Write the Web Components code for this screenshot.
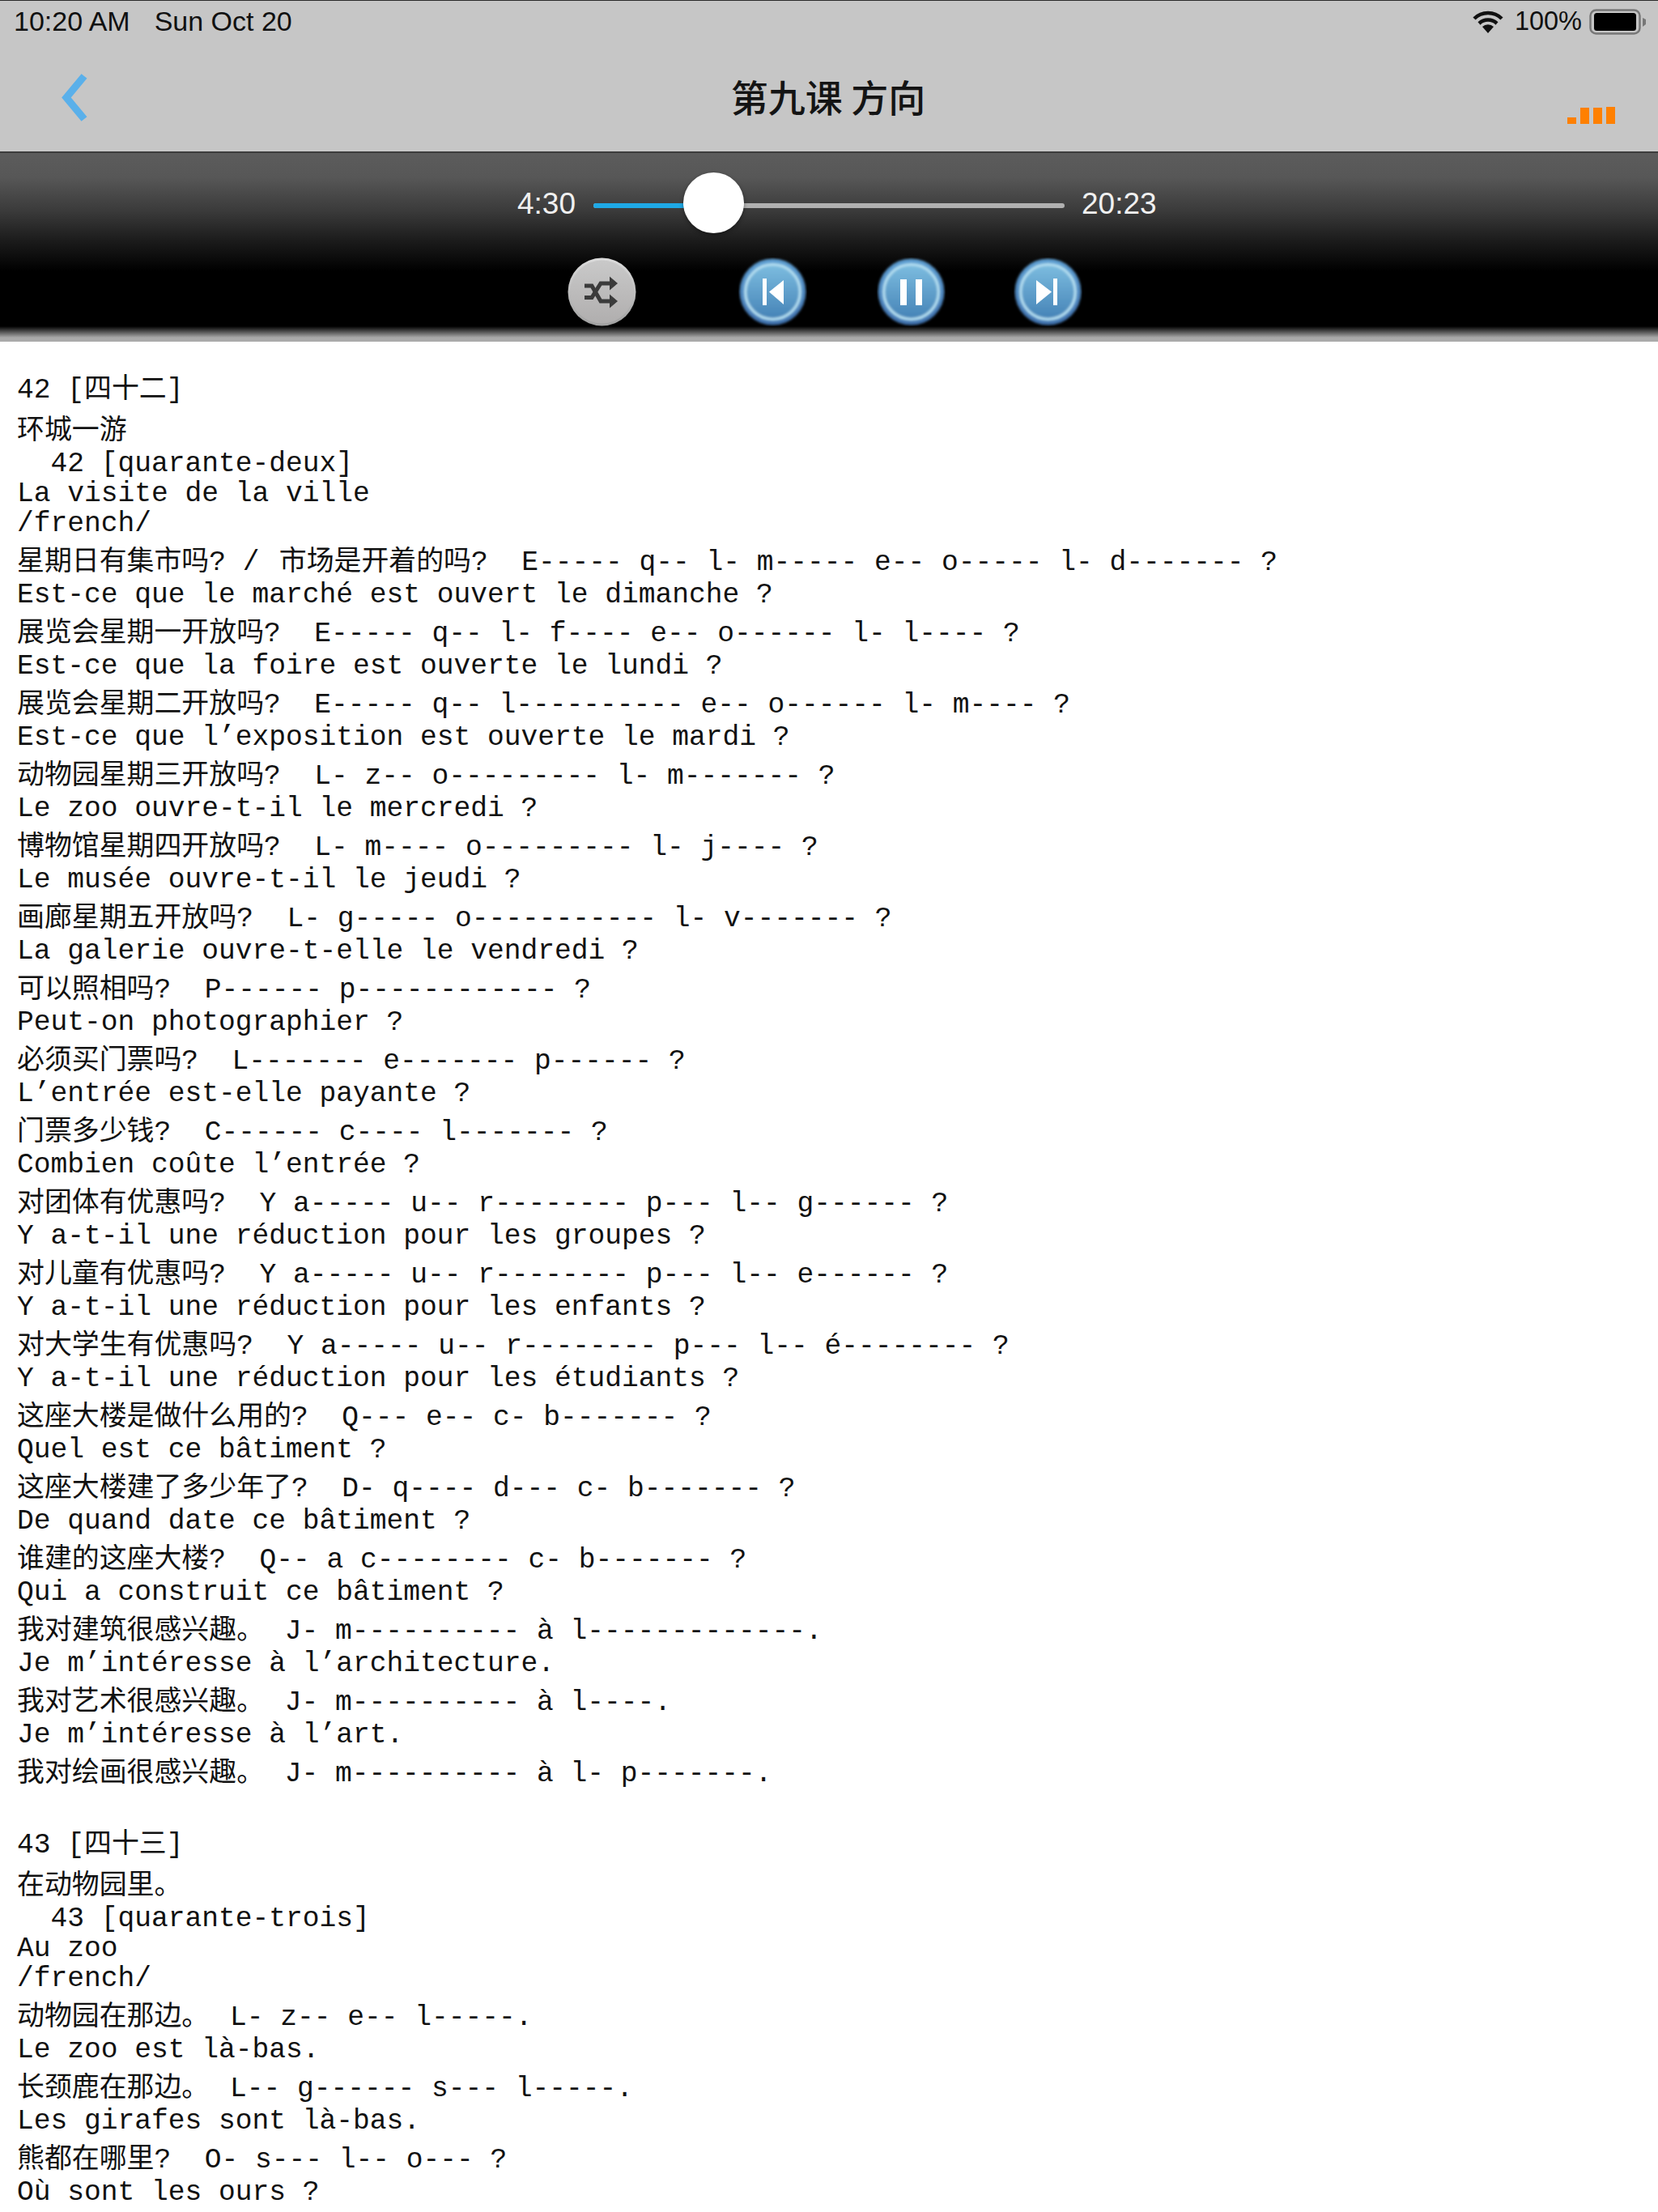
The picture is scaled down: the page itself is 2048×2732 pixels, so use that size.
<!DOCTYPE html>
<html lang="zh">
<head>
<meta charset="utf-8">
<title>第九课 方向</title>
<style>
  html, body { margin: 0; background: #fff; height: 2732px; overflow: hidden; }
</style>
</head>
<body>
<app-header title-text="第九课 方向"></app-header>
<audio-player current="4:30" total="20:23"></audio-player>
<lesson-text>
<zh-line>42 [<zh-t>四十二</zh-t>]</zh-line>
<zh-line><zh-t>环城一游</zh-t></zh-line>
<fr-line>  42 [quarante-deux]</fr-line>
<fr-line>La visite de la ville</fr-line>
<fr-line>/french/</fr-line>
<zh-line><zh-t>星期日有集市吗</zh-t>? / <zh-t gap>市场是开着的吗</zh-t>?  E----- q-- l- m----- e-- o----- l- d------- ?</zh-line>
<fr-line>Est-ce que le marché est ouvert le dimanche ?</fr-line>
<zh-line><zh-t>展览会星期一开放吗</zh-t>?  E----- q-- l- f---- e-- o------ l- l---- ?</zh-line>
<fr-line>Est-ce que la foire est ouverte le lundi ?</fr-line>
<zh-line><zh-t>展览会星期二开放吗</zh-t>?  E----- q-- l---------- e-- o------ l- m---- ?</zh-line>
<fr-line>Est-ce que l’exposition est ouverte le mardi ?</fr-line>
<zh-line><zh-t>动物园星期三开放吗</zh-t>?  L- z-- o--------- l- m------- ?</zh-line>
<fr-line>Le zoo ouvre-t-il le mercredi ?</fr-line>
<zh-line><zh-t>博物馆星期四开放吗</zh-t>?  L- m---- o--------- l- j---- ?</zh-line>
<fr-line>Le musée ouvre-t-il le jeudi ?</fr-line>
<zh-line><zh-t>画廊星期五开放吗</zh-t>?  L- g----- o----------- l- v------- ?</zh-line>
<fr-line>La galerie ouvre-t-elle le vendredi ?</fr-line>
<zh-line><zh-t>可以照相吗</zh-t>?  P------ p------------ ?</zh-line>
<fr-line>Peut-on photographier ?</fr-line>
<zh-line><zh-t>必须买门票吗</zh-t>?  L------- e------- p------ ?</zh-line>
<fr-line>L’entrée est-elle payante ?</fr-line>
<zh-line><zh-t>门票多少钱</zh-t>?  C------ c---- l------- ?</zh-line>
<fr-line>Combien coûte l’entrée ?</fr-line>
<zh-line><zh-t>对团体有优惠吗</zh-t>?  Y a----- u-- r-------- p--- l-- g------ ?</zh-line>
<fr-line>Y a-t-il une réduction pour les groupes ?</fr-line>
<zh-line><zh-t>对儿童有优惠吗</zh-t>?  Y a----- u-- r-------- p--- l-- e------ ?</zh-line>
<fr-line>Y a-t-il une réduction pour les enfants ?</fr-line>
<zh-line><zh-t>对大学生有优惠吗</zh-t>?  Y a----- u-- r-------- p--- l-- é-------- ?</zh-line>
<fr-line>Y a-t-il une réduction pour les étudiants ?</fr-line>
<zh-line><zh-t>这座大楼是做什么用的</zh-t>?  Q--- e-- c- b------- ?</zh-line>
<fr-line>Quel est ce bâtiment ?</fr-line>
<zh-line><zh-t>这座大楼建了多少年了</zh-t>?  D- q---- d--- c- b------- ?</zh-line>
<fr-line>De quand date ce bâtiment ?</fr-line>
<zh-line><zh-t>谁建的这座大楼</zh-t>?  Q-- a c-------- c- b------- ?</zh-line>
<fr-line>Qui a construit ce bâtiment ?</fr-line>
<zh-line><zh-t stop>我对建筑很感兴趣。</zh-t> J- m---------- à l-------------.</zh-line>
<fr-line>Je m’intéresse à l’architecture.</fr-line>
<zh-line><zh-t stop>我对艺术很感兴趣。</zh-t> J- m---------- à l----.</zh-line>
<fr-line>Je m’intéresse à l’art.</fr-line>
<zh-line><zh-t stop>我对绘画很感兴趣。</zh-t> J- m---------- à l- p-------.</zh-line>
<fr-line> </fr-line>
<zh-line>43 [<zh-t>四十三</zh-t>]</zh-line>
<zh-line><zh-t>在动物园里。</zh-t></zh-line>
<fr-line>  43 [quarante-trois]</fr-line>
<fr-line>Au zoo</fr-line>
<fr-line>/french/</fr-line>
<zh-line><zh-t stop>动物园在那边。</zh-t> L- z-- e-- l-----.</zh-line>
<fr-line>Le zoo est là-bas.</fr-line>
<zh-line><zh-t stop>长颈鹿在那边。</zh-t> L-- g------ s--- l-----.</zh-line>
<fr-line>Les girafes sont là-bas.</fr-line>
<zh-line><zh-t>熊都在哪里</zh-t>?  O- s--- l-- o--- ?</zh-line>
<fr-line>Où sont les ours ?</fr-line>
</lesson-text>

<script>
/* ------------- HEADER ------------- */
const template_header = document.createElement("template");
template_header.innerHTML = /*html*/`
  <style>
    :host {
      display: block;
      height: 187px;
      box-sizing: border-box;
      background: #c6c6c6;
      border-top: 1px solid #2a2a2a;
      font-family: "Liberation Sans", sans-serif;
      color: #111;
    }
    .status {
      display: flex;
      align-items: center;
      height: 51px;
      padding: 0 13px 0 17px;
      font-size: 34px;
    }
    .date { margin-left: 30px; }
    .right { margin-left: auto; display: flex; align-items: center; font-size: 32.5px; }
    .wifi { width: 40px; height: 28px; margin-right: 13px; }
    .battery { width: 72px; height: 32px; margin-left: 9px; }
    nav {
      display: grid;
      grid-template-columns: 1fr auto 1fr;
      align-items: center;
      height: 135px;
    }
    .back { width: 42px; height: 66px; margin-left: 72px; display: block; }
    h1 {
      margin: -3px 0 0 -2px;
      font: 500 46px "Noto Sans CJK SC", sans-serif;
      color: #141414;
    }
    .signal {
      justify-self: end;
      align-self: end;
      display: block;
      width: 60px;
      height: 22px;
      margin: 0 53px 33px 0;
    }
  </style>
  <div class="status">
    <span>10:20 AM</span><span class="date">Sun Oct 20</span>
    <div class="right">
      <svg class="wifi" viewBox="0 0 40 28">
        <path d="M3 10 A24 24 0 0 1 37 10" fill="none" stroke="#111" stroke-width="4.5"/>
        <path d="M9 16 A16 16 0 0 1 31 16" fill="none" stroke="#111" stroke-width="4.5"/>
        <path d="M13 20 A10 10 0 0 1 27 20 L20 28 Z" fill="#111"/>
      </svg>
      <span>100%</span>
      <svg class="battery" viewBox="0 0 72 32">
        <rect x="1.5" y="1.5" width="61" height="29" rx="7" fill="none" stroke="#777" stroke-width="2.5"/>
        <rect x="6" y="5" width="52" height="22" rx="3.5" fill="#000"/>
        <path d="M66 11 L70 13 V19 L66 22 Z" fill="#777"/>
      </svg>
    </div>
  </div>
  <nav>
    <svg class="back" viewBox="0 0 42 66">
      <path d="M32 7 L10 33.5 L32 60" fill="none" stroke="#5ab0ea" stroke-width="9"/>
    </svg>
    <h1></h1>
    <svg class="signal" viewBox="0 0 60 22">
      <rect x="1" y="13" width="11" height="8" fill="#ff8000"/>
      <rect x="17" y="1" width="11" height="20" fill="#ff8000"/>
      <rect x="33" y="1" width="11" height="20" fill="#ff8000"/>
      <rect x="49" y="0" width="11" height="21" fill="#ff8000"/>
    </svg>
  </nav>
`;

class AppHeader extends HTMLElement {
  constructor() {
    super();
    const shadow = this.attachShadow({ mode: "open" });
    shadow.append(template_header.content.cloneNode(true));
  }

  connectedCallback() {
    this.shadowRoot.querySelector("h1").textContent = this.getAttribute("title-text");
  }
}
customElements.define("app-header", AppHeader);

/* ------------- BUTTONS ------------ */
const glyphs = {
  prev: `<rect x="30" y="26" width="5" height="33" fill="#fff"/><path d="M38 42.5 L56 28 V58 Z" fill="#fff"/>`,
  pause: `<rect x="29" y="27" width="8" height="32" fill="#fff"/><rect x="48" y="27" width="8" height="32" fill="#fff"/>`,
  next: `<path d="M47 42.5 L28 28 V58 Z" fill="#fff"/><rect x="49" y="26" width="5" height="33" fill="#fff"/>`
};

class RoundButton extends HTMLElement {
  constructor() {
    super();
    this.attachShadow({ mode: "open" });
  }

  connectedCallback() {
    const icon = this.getAttribute("icon");
    const body = icon === "shuffle"
      ? /*html*/`
        <circle cx="42.5" cy="42.5" r="42" fill="url(#g)" filter="url(#s)"/>
        <circle cx="42.5" cy="42.5" r="39" fill="url(#i)" filter="url(#s)"/>
        <g fill="none" stroke="#3a3a3a" stroke-width="5" filter="url(#s)">
          <path d="M21 35 H30 L41 54 H54"/>
          <path d="M21 49.5 H30 L41 32 H54"/>
        </g>
        <g fill="#3a3a3a" filter="url(#s)">
          <path d="M52 23.5 L62 32 L52 40.5 Z"/>
          <path d="M52 45.5 L62 54 L52 62.5 Z"/>
        </g>`
      : /*html*/`
        <circle cx="42.5" cy="42.5" r="41" fill="url(#o)" filter="url(#b)"/>
        <circle cx="42.5" cy="42.5" r="34" fill="url(#i2)" stroke="#b4def0" stroke-width="3.5" filter="url(#b)"/>
        <g filter="url(#s)">${glyphs[icon]}</g>`;

    this.shadowRoot.innerHTML = /*html*/`
      <style>
        :host { display: block; width: 85px; height: 85px; }
        svg { display: block; }
      </style>
      <svg width="85" height="85" viewBox="0 0 85 85">
        <defs>
          <filter id="s"><feGaussianBlur stdDeviation="0.7"/></filter>
          <filter id="b"><feGaussianBlur stdDeviation="1.6"/></filter>
          <linearGradient id="g" x1="0" y1="0" x2="0" y2="1">
            <stop offset="0" stop-color="#dcdcdc"/><stop offset="1" stop-color="#a0a0a0"/>
          </linearGradient>
          <linearGradient id="i" x1="0" y1="0" x2="0" y2="1">
            <stop offset="0" stop-color="#c9c9c9"/><stop offset="1" stop-color="#b0aeae"/>
          </linearGradient>
          <linearGradient id="o" x1="0" y1="0" x2="0" y2="1">
            <stop offset="0" stop-color="#5e9fd2"/><stop offset="1" stop-color="#3f70ac"/>
          </linearGradient>
          <linearGradient id="i2" x1="0" y1="0" x2="0" y2="1">
            <stop offset="0" stop-color="#7dbde0"/><stop offset="1" stop-color="#4482b6"/>
          </linearGradient>
        </defs>
        ${body}
      </svg>
    `;
  }
}
customElements.define("round-button", RoundButton);

/* ------------- PLAYER ------------- */
const template_player = document.createElement("template");
template_player.innerHTML = /*html*/`
  <style>
    :host {
      display: block;
      height: 235px;
      box-sizing: border-box;
      border-top: 2px solid #3c3c3c;
      background: linear-gradient(#5c5c5c 0, #575757 30px, #3a3a3a 72px, #1a1a1a 110px, #000 146px, #000 214px, #aaa 228px, #aaa 233px);
      font-family: "Liberation Sans", sans-serif;
      font-size: 37px;
      color: #f0f0f0;
    }
    .slider {
      display: flex;
      align-items: center;
      height: 74px;
      margin-top: 26px;
      padding-left: 639px;
    }
    .track {
      position: relative;
      width: 582px;
      height: 6px;
      margin: 4px 21px 0 22px;
      background: #b0b0b0;
      border-radius: 3px;
    }
    .fill { width: 130px; height: 100%; background: #1fa9e6; border-radius: 3px 0 0 3px; }
    .thumb {
      position: absolute;
      left: 111px;
      top: -38px;
      width: 75px;
      height: 75px;
      border-radius: 50%;
      background: #fff;
      box-shadow: 0 2px 5px rgba(0,0,0,.4);
    }
    .controls {
      display: flex;
      margin-top: 29px;
      padding-left: 701px;
    }
    .controls round-button:nth-child(1) { margin-right: 126px; }
    .controls round-button:nth-child(2) { margin-right: 86px; }
    .controls round-button:nth-child(3) { margin-right: 84px; }
  </style>
  <div class="slider">
    <span class="now"></span>
    <div class="track"><div class="fill"></div><div class="thumb"></div></div>
    <span class="end"></span>
  </div>
  <div class="controls">
    <round-button icon="shuffle"></round-button>
    <round-button icon="prev"></round-button>
    <round-button icon="pause"></round-button>
    <round-button icon="next"></round-button>
  </div>
`;

class AudioPlayer extends HTMLElement {
  constructor() {
    super();
    const shadow = this.attachShadow({ mode: "open" });
    shadow.append(template_player.content.cloneNode(true));
  }

  connectedCallback() {
    this.shadowRoot.querySelector(".now").textContent = this.getAttribute("current");
    this.shadowRoot.querySelector(".end").textContent = this.getAttribute("total");
  }
}
customElements.define("audio-player", AudioPlayer);

/* -------------- TEXT -------------- */
class LessonText extends HTMLElement {
  constructor() {
    super();
    this.attachShadow({ mode: "open" }).innerHTML = /*html*/`<style>
        :host {
          display: block;
          padding: 28px 0 0 21px;
          font-family: "Liberation Mono", "Noto Sans CJK SC", monospace;
          font-size: 34.6px;
          color: #111;
        }
      </style><slot></slot>`;
  }
}
customElements.define("lesson-text", LessonText);

// no whitespace around the slot: these hosts keep spaces as written
const lineClass = (height, leading) => class extends HTMLElement {
  constructor() {
    super();
    this.attachShadow({ mode: "open" }).innerHTML =
      `<style>:host { display: block; height: ${height}px; line-height: ${leading}px; white-space: pre; }</style><slot></slot>`;
  }
};
customElements.define("zh-line", lineClass(51, 53));
customElements.define("fr-line", lineClass(37, 42));

class ZhText extends HTMLElement {
  constructor() {
    super();
    this.attachShadow({ mode: "open" }).innerHTML =
      `<style>
        :host { font-family: "Noto Sans CJK SC", sans-serif; font-size: 33.9px; }
        :host([gap]) { margin-left: 3.5px; }
        :host([stop]) { margin-right: 5px; }
      </style><slot></slot>`;
  }
}
customElements.define("zh-t", ZhText);
</script>
</body>
</html>
